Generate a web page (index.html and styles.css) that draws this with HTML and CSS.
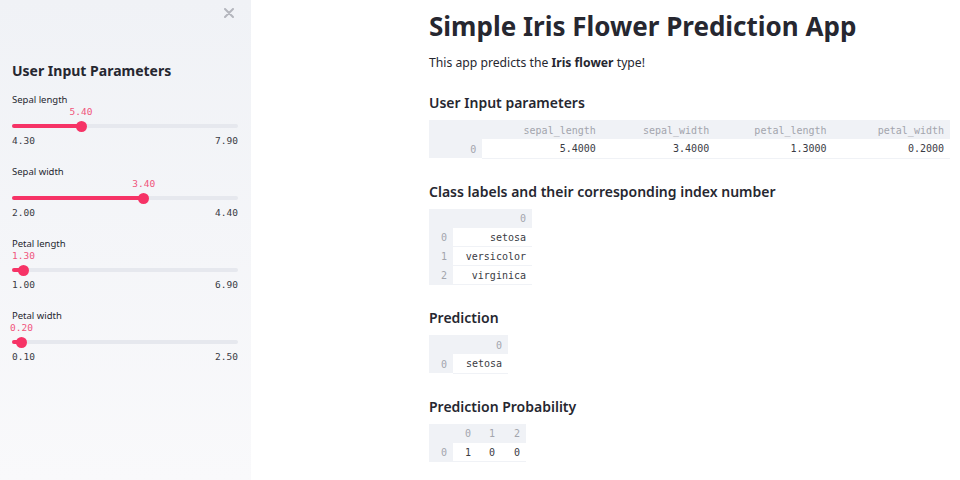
FILE: index.html
```html
<!DOCTYPE html>
<html>
<head>
<meta charset="utf-8">
<link rel="stylesheet" href="styles.css">
</head>
<body>
<aside class="sidebar">
  <div class="close-row">
    <svg class="close" width="10" height="10" viewBox="0 0 10 10"><path d="M1 1L9 9M9 1L1 9" stroke="#b4b6bd" stroke-width="2" stroke-linecap="round"/></svg>
  </div>
  <h2 class="side-title">User Input Parameters</h2>

  <div class="slider">
    <div class="s-label">Sepal length</div>
    <div class="s-value-row"><span class="s-value" style="left:30.56%">5.40</span></div>
    <div class="s-track"><div class="s-fill" style="width:30.56%"></div><div class="s-thumb" style="left:30.56%"></div></div>
    <div class="s-minmax"><span>4.30</span><span>7.90</span></div>
  </div>

  <div class="slider">
    <div class="s-label">Sepal width</div>
    <div class="s-value-row"><span class="s-value" style="left:58.33%">3.40</span></div>
    <div class="s-track"><div class="s-fill" style="width:58.33%"></div><div class="s-thumb" style="left:58.33%"></div></div>
    <div class="s-minmax"><span>2.00</span><span>4.40</span></div>
  </div>

  <div class="slider">
    <div class="s-label">Petal length</div>
    <div class="s-value-row"><span class="s-value" style="left:5.08%">1.30</span></div>
    <div class="s-track"><div class="s-fill" style="width:5.08%"></div><div class="s-thumb" style="left:5.08%"></div></div>
    <div class="s-minmax"><span>1.00</span><span>6.90</span></div>
  </div>

  <div class="slider">
    <div class="s-label">Petal width</div>
    <div class="s-value-row"><span class="s-value" style="left:4.17%">0.20</span></div>
    <div class="s-track"><div class="s-fill" style="width:4.17%"></div><div class="s-thumb" style="left:4.17%"></div></div>
    <div class="s-minmax"><span>0.10</span><span>2.50</span></div>
  </div>
</aside>

<main class="main">
  <h1 class="title">Simple Iris Flower Prediction App</h1>
  <p class="intro">This app predicts the <b>Iris flower</b> type!</p>

  <h3 class="sub">User Input parameters</h3>
  <table class="df df-wide">
    <colgroup><col style="width:54px"><col style="width:120px"><col style="width:114px"><col style="width:118px"><col style="width:118px"></colgroup>
    <tr><th></th><th>sepal_length</th><th>sepal_width</th><th>petal_length</th><th>petal_width</th></tr>
    <tr><th>0</th><td>5.4000</td><td>3.4000</td><td>1.3000</td><td>0.2000</td></tr>
  </table>

  <h3 class="sub">Class labels and their corresponding index number</h3>
  <table class="df">
    <colgroup><col style="width:24px"><col style="width:79px"></colgroup>
    <tr><th></th><th>0</th></tr>
    <tr><th>0</th><td>setosa</td></tr>
    <tr><th>1</th><td>versicolor</td></tr>
    <tr><th>2</th><td>virginica</td></tr>
  </table>

  <h3 class="sub">Prediction</h3>
  <table class="df">
    <colgroup><col style="width:24px"><col style="width:55px"></colgroup>
    <tr><th></th><th>0</th></tr>
    <tr><th>0</th><td>setosa</td></tr>
  </table>

  <h3 class="sub">Prediction Probability</h3>
  <table class="df">
    <colgroup><col style="width:24px"><col style="width:24px"><col style="width:24px"><col style="width:25px"></colgroup>
    <tr><th></th><th>0</th><th>1</th><th>2</th></tr>
    <tr><th>0</th><td>1</td><td>0</td><td>0</td></tr>
  </table>
</main>
</body>
</html>
```

FILE: styles.css
```css
* { box-sizing: border-box; }
html, body { margin: 0; padding: 0; }
body {
  display: flex;
  width: 960px;
  height: 480px;
  overflow: hidden;
  background: #ffffff;
  color: #262730;
  font-family: "Noto Sans", "Open Sans", sans-serif;
}

.sidebar {
  width: 251px;
  flex: none;
  height: 480px;
  background: linear-gradient(180deg, #f0f2f6 0%, #f9f9fb 100%);
  padding: 0 13px 0 12px;
}
.close-row {
  display: flex;
  justify-content: flex-end;
  padding: 8px 4px 0 0;
  height: 18px;
}
.close { display: block; }

.side-title {
  margin: 43px 0 0;
  font-size: 14px;
  line-height: 20px;
  font-weight: 700;
}

.slider { margin-top: 13px; }
.slider + .slider { margin-top: 19px; }
.s-label {
  font-size: 9.5px;
  line-height: 12px;
}
.s-value-row {
  position: relative;
  height: 12px;
}
.s-value {
  position: absolute;
  top: 0;
  transform: translateX(-50%);
  font-family: "DejaVu Sans Mono", monospace;
  font-size: 9.5px;
  line-height: 12px;
  color: #f0557c;
}
.s-track {
  position: relative;
  margin-top: 6px;
  height: 4px;
  border-radius: 2px;
  background: #e6e8ee;
}
.s-fill {
  height: 4px;
  border-radius: 2px;
  background: #f63366;
}
.s-thumb {
  position: absolute;
  top: -3.5px;
  width: 11px;
  height: 11px;
  margin-left: -5.5px;
  border-radius: 50%;
  background: #f63366;
}
.s-minmax {
  display: flex;
  justify-content: space-between;
  margin-top: 7px;
  font-family: "DejaVu Sans Mono", monospace;
  font-size: 9.5px;
  line-height: 12px;
  color: #3a3b44;
}

.main {
  flex: 1;
  padding: 8px 10px 0 178px;
}
.title {
  margin: 0;
  font-size: 26px;
  line-height: 36px;
  font-weight: 700;
}
.intro {
  margin: 10px 0 0;
  font-size: 12.2px;
  line-height: 18px;
}
.intro b { font-weight: 700; }
.sub {
  margin: 21px 0 7px;
  font-size: 14px;
  line-height: 20px;
  font-weight: 600;
}
.df + .sub { margin-top: 23px; }

.df {
  border-collapse: collapse;
  table-layout: fixed;
  font-family: "DejaVu Sans Mono", monospace;
  font-size: 10px;
}
.df th, .df td {
  height: 19px;
  padding: 1px 6px 0 0;
  text-align: right;
  font-weight: 400;
  white-space: nowrap;
}
.df th {
  background: #f0f2f6;
  color: #a3a5ad;
}
.df td {
  background: #ffffff;
  color: #3a3b44;
  border-bottom: 1px solid #f0f2f6;
}
```
